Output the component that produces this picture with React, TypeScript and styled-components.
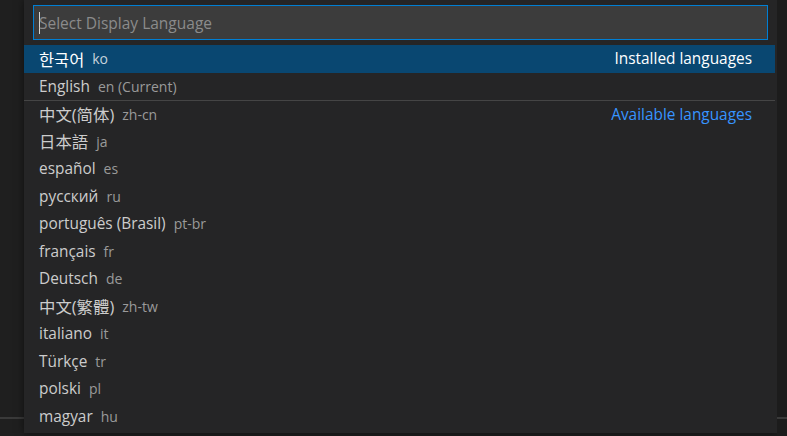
import React from "react";
import styled, { createGlobalStyle } from "styled-components";

const Global = createGlobalStyle`
  html, body { margin: 0; padding: 0; background: #1e1e1e; overflow: hidden; }
  body { font-family: "Open Sans", "Noto Sans CJK SC", sans-serif; }
  #root { height: 436px; }
`;

const Page = styled.div`
  display: flex;
  height: 436px;
  width: 787px;
  background: #1e1e1e;
`;

const SidePane = styled.div<{ $w: number; $bg: string }>`
  width: ${(p) => p.$w}px;
  flex: none;
  display: flex;
  flex-direction: column;
  background: ${(p) => p.$bg};
`;

const SideTop = styled.div`
  height: 419px;
  border-bottom: 2px solid #3a3a3a;
  box-sizing: border-box;
  flex: none;
`;

const Widget = styled.div`
  width: 753px;
  height: 433px;
  flex: none;
  background: #252526;
  box-sizing: border-box;
  padding-top: 5px;
  display: flex;
  flex-direction: column;
  box-shadow: 0 0 8px rgba(0, 0, 0, 0.5);
  overflow: hidden;
`;

const InputBox = styled.div`
  margin: 0 9px 0 9px;
  height: 35px;
  box-sizing: border-box;
  border: 1px solid #007fd4;
  background: #3c3c3c;
  display: flex;
  align-items: center;
  padding-left: 5px;
  font-size: 15.5px;
  color: #8b8b8b;
`;

const Caret = styled.span`
  display: inline-block;
  width: 1px;
  height: 22px;
  background: #d4d4d4;
  margin-right: -1px;
`;

const List = styled.div`
  margin-top: 5px;
  margin-right: 2px;
  display: flex;
  flex-direction: column;
`;

const Row = styled.div<{ $selected?: boolean; $sep?: boolean }>`
  height: 27.5px;
  box-sizing: border-box;
  display: flex;
  align-items: center;
  padding: 0 23px 0 15px;
  font-size: 15.4px;
  background: ${(p) => (p.$selected ? "#094771" : "transparent")};
  color: ${(p) => (p.$selected ? "#ffffff" : "#cccccc")};
  border-top: ${(p) => (p.$sep ? "1px solid #454545" : "none")};
  white-space: nowrap;
`;

const Label = styled.span<{ $cjk?: boolean }>`
  flex: none;
  font-size: ${(p) => (p.$cjk ? "16.4px" : "inherit")};
`;

const Desc = styled.span<{ $selected?: boolean }>`
  margin-left: 8px;
  font-size: 14px;
  color: ${(p) => (p.$selected ? "#c6d2dc" : "#9a9a9a")};
`;

const Group = styled.span<{ $accent?: boolean }>`
  margin-left: auto;
  color: ${(p) => (p.$accent ? "#3794ff" : "#ffffff")};
`;

const Bottom = styled.div`
  flex: 1;
`;

type Item = { label: string; desc: string; group?: string; accent?: boolean; sep?: boolean; cjk?: boolean };

const items: Item[] = [
  { label: "한국어", desc: "ko", group: "Installed languages", cjk: true },
  { label: "English", desc: "en (Current)" },
  { label: "中文(简体)", desc: "zh-cn", group: "Available languages", accent: true, sep: true, cjk: true },
  { label: "日本語", desc: "ja", cjk: true },
  { label: "español", desc: "es" },
  { label: "русский", desc: "ru" },
  { label: "português (Brasil)", desc: "pt-br" },
  { label: "français", desc: "fr" },
  { label: "Deutsch", desc: "de" },
  { label: "中文(繁體)", desc: "zh-tw", cjk: true },
  { label: "italiano", desc: "it" },
  { label: "Türkçe", desc: "tr" },
  { label: "polski", desc: "pl" },
  { label: "magyar", desc: "hu" },
];

export default function App() {
  return (
    <>
      <Global />
      <Page>
        <SidePane $w={24} $bg="#1f1f1f">
          <SideTop />
        </SidePane>
        <Widget>
          <InputBox>
            <Caret />
            <span>Select Display Language</span>
          </InputBox>
          <List>
            {items.map((it, i) => (
              <Row key={it.desc} $selected={i === 0} $sep={it.sep}>
                <Label $cjk={it.cjk}>{it.label}</Label>
                <Desc $selected={i === 0}>{it.desc}</Desc>
                {it.group && <Group $accent={it.accent}>{it.group}</Group>}
              </Row>
            ))}
          </List>
          <Bottom />
        </Widget>
        <SidePane $w={10} $bg="#1c1c1c">
          <SideTop />
        </SidePane>
      </Page>
    </>
  );
}
